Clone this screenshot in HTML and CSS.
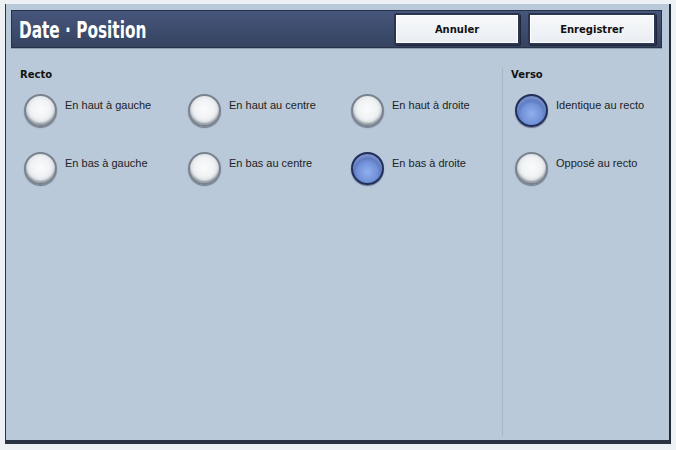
FILE: index.html
```html
<!DOCTYPE html>
<html lang="fr">
<head>
<meta charset="utf-8">
<title>Date · Position</title>
<link rel="stylesheet" href="styles.css">
</head>
<body>
<div class="screen">
  <div class="titlebar">
    <h1 class="title">Date · Position</h1>
    <div class="actions">
      <button class="btn btn-cancel">Annuler</button>
      <button class="btn btn-save">Enregistrer</button>
    </div>
  </div>
  <div class="content">
    <section class="recto">
      <h2 class="label">Recto</h2>
      <div class="grid">
        <div class="opt"><span class="radio"></span><span class="txt">En haut à gauche</span></div>
        <div class="opt"><span class="radio"></span><span class="txt">En haut au centre</span></div>
        <div class="opt"><span class="radio"></span><span class="txt">En haut à droite</span></div>
        <div class="opt"><span class="radio"></span><span class="txt">En bas à gauche</span></div>
        <div class="opt"><span class="radio"></span><span class="txt">En bas au centre</span></div>
        <div class="opt"><span class="radio on"></span><span class="txt">En bas à droite</span></div>
      </div>
    </section>
    <section class="verso">
      <h2 class="label">Verso</h2>
      <div class="list">
        <div class="opt"><span class="radio on"></span><span class="txt">Identique au recto</span></div>
        <div class="opt"><span class="radio"></span><span class="txt">Opposé au recto</span></div>
      </div>
    </section>
  </div>
</div>
</body>
</html>
```
FILE: styles.css
```css
html, body {
  margin: 0;
  padding: 0;
  background: #eef1f3;
}
body {
  padding: 4px 0 0 5px;
  width: 676px;
  height: 450px;
  box-sizing: border-box;
  overflow: hidden;
}
.screen {
  width: 666px;
  height: 440px;
  box-sizing: border-box;
  border-left: 1px solid #2a3342;
  border-right: 2px solid #222a36;
  border-bottom: 4px solid #2a3342;
  background: #b9c9d9;
  display: flex;
  flex-direction: column;
}
.titlebar {
  margin: 6px 7px 0 5px;
  height: 38px;
  box-sizing: border-box;
  background: linear-gradient(#46557a, #3c4a6c 60%, #36435f);
  border: 1px solid #27314a;
  box-shadow: 0 1px 0 #8d9cb3;
  display: flex;
  align-items: center;
  justify-content: space-between;
  padding: 0 5px 0 7px;
}
.title {
  margin: 0;
  font-family: "DejaVu Sans Condensed", "Liberation Sans", sans-serif;
  font-weight: bold;
  font-size: 23px;
  line-height: 26px;
  padding-top: 2px;
  color: #ffffff;
  transform: scaleX(0.74);
  transform-origin: left center;
  white-space: nowrap;
}
.actions {
  display: flex;
  gap: 8px;
}
.btn {
  height: 32px;
  border: 2px solid #2b3550;
  border-radius: 2px;
  background: linear-gradient(#f8f9fb, #e9edf2);
  box-shadow: inset 0 0 0 1px #ffffff, 1px 1px 0 #1e2638;
  font-family: "DejaVu Sans", Verdana, sans-serif;
  font-weight: bold;
  font-size: 10px;
  color: #111;
  padding: 0;
}
.btn-cancel { width: 126px; margin-left: 1px; }
.btn-save { width: 128px; }
.content {
  flex: 1;
  display: flex;
  padding: 20px 0 4px 0;
}
.recto {
  width: 482px;
  padding-left: 14px;
  border-right: 1px solid #a7b7c8;
  margin-right: 8px;
}
.verso {
  flex: 1;
}
.label {
  margin: 0;
  font-family: "DejaVu Sans", Verdana, sans-serif;
  font-weight: bold;
  font-size: 10px;
  color: #111;
  line-height: 13px;
}
.grid {
  margin-top: 13px;
  display: grid;
  grid-template-columns: 164px 163px 150px;
  row-gap: 25px;
  padding-left: 4px;
}
.list {
  margin-top: 13px;
  display: flex;
  flex-direction: column;
  gap: 25px;
  padding-left: 4px;
}
.opt {
  display: flex;
  align-items: flex-start;
  gap: 8px;
  height: 33px;
}
.txt {
  font-family: "Liberation Sans", Arial, sans-serif;
  font-size: 11px;
  color: #222;
  padding-top: 5px;
  line-height: 13px;
}
.radio {
  flex: none;
  width: 33px;
  height: 33px;
  border-radius: 50%;
  box-sizing: border-box;
  border: 2px solid #7a828d;
  background: radial-gradient(circle at 50% 45%, #fbfbfc 0%, #f0f2f4 45%, #d6dbe1 72%, #a3abb5 100%);
  box-shadow: 0 1px 1px rgba(40, 50, 70, 0.5), inset 0 -2px 2px rgba(60,70,80,0.45);
}
.radio.on {
  border: 2px solid #22305a;
  background: radial-gradient(circle at 50% 62%, #90afec 0%, #7393da 42%, #4c66ad 74%, #2c3c70 100%);
  box-shadow: 0 1px 1px rgba(20, 30, 60, 0.5), inset 0 3px 2px rgba(200,215,245,0.35);
}
```
